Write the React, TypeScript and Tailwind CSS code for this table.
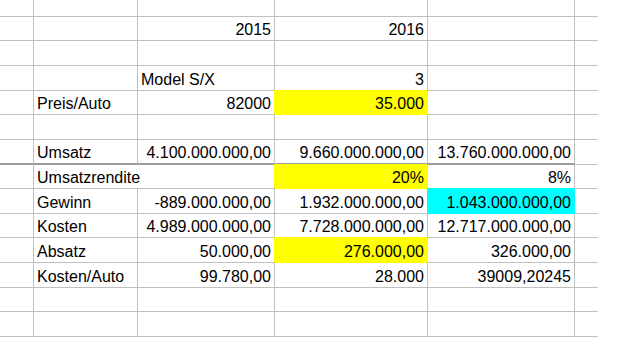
import React from "react";

type Cell = {
  text?: string;
  align?: "left" | "right";
  fill?: "yellow" | "cyan";
  span?: boolean;
};

type Row = {
  h: string;
  cells: Cell[];
  thick?: boolean;
};

const widths = ["w-[34px]", "w-[104px]", "w-[137px]", "w-[153px]", "w-[147px]", "w-[23px]"];

const R = (text: string, fill?: Cell["fill"]): Cell => ({ text, align: "right", fill });
const L = (text: string): Cell => ({ text, align: "left" });
const E: Cell = {};

const rows: Row[] = [
  { h: "h-[17px]", cells: [E, E, E, E, E, E] },
  { h: "h-[24px]", cells: [E, E, R("2015"), R("2016"), E, E] },
  { h: "h-[25px]", cells: [E, E, E, E, E, E] },
  { h: "h-[25px]", cells: [E, E, L("Model S/X"), R("3"), E, E] },
  { h: "h-[24px]", cells: [E, L("Preis/Auto"), R("82000"), R("35.000", "yellow"), E, E] },
  { h: "h-[25px]", cells: [E, E, E, E, E, E] },
  {
    h: "h-[25px]",
    thick: true,
    cells: [E, L("Umsatz"), R("4.100.000.000,00"), R("9.660.000.000,00"), R("13.760.000.000,00"), E],
  },
  {
    h: "h-[24px]",
    cells: [E, { text: "Umsatzrendite", align: "left", span: true }, R("20%", "yellow"), R("8%"), E],
  },
  {
    h: "h-[25px]",
    cells: [E, L("Gewinn"), R("-889.000.000,00"), R("1.932.000.000,00"), R("1.043.000.000,00", "cyan"), E],
  },
  {
    h: "h-[24px]",
    cells: [E, L("Kosten"), R("4.989.000.000,00"), R("7.728.000.000,00"), R("12.717.000.000,00"), E],
  },
  {
    h: "h-[25px]",
    cells: [E, L("Absatz"), R("50.000,00"), R("276.000,00", "yellow"), R("326.000,00"), E],
  },
  {
    h: "h-[25px]",
    cells: [E, L("Kosten/Auto"), R("99.780,00"), R("28.000"), R("39009,20245"), E],
  },
  { h: "h-[24px]", cells: [E, E, E, E, E, E] },
  { h: "h-[25px]", cells: [E, E, E, E, E, E] },
];

function SheetRow({ row }: { row: Row }) {
  let col = 0;
  return (
    <div className={`flex ${row.h}`}>
      {row.cells.map((cell, i) => {
        const start = col;
        col += cell.span ? 2 : 1;
        const last = start === widths.length - 1;
        const width = cell.span ? "w-[241px]" : widths[start];

        let color = "border-[#c0c0c0]";
        if (row.thick && !last) color = "border-[#c0c0c0] border-b-[#9a9a9a]";
        let bg = "bg-white";
        if (cell.fill === "yellow") {
          bg = "bg-[#ffff00] shadow-[-1px_-1px_0_#ffff00]";
          color = "border-[#ffff00]";
        } else if (cell.fill === "cyan") {
          bg = "bg-[#00ffff] shadow-[-1px_-1px_0_#00ffff]";
          color = "border-[#00ffff]";
        }

        return (
          <div
            key={i}
            className={`${width} shrink-0 flex items-end ${row.thick && !last ? "border-b-2" : "border-b"} ${
              last ? "" : "border-r"
            } ${color} ${bg} ${cell.align === "right" ? "justify-end pr-[3px]" : "justify-start pl-[3px]"}`}
          >
            {cell.text && <span className="pb-[1px] whitespace-nowrap">{cell.text}</span>}
          </div>
        );
      })}
    </div>
  );
}

export default function App() {
  return (
    <div className="w-[621px] h-[352px] bg-white overflow-hidden font-['Liberation_Sans',Arial,sans-serif] text-[16px] leading-[18px] text-black">
      <div className="w-[598px]">
        {rows.map((row, i) => (
          <SheetRow key={i} row={row} />
        ))}
      </div>
    </div>
  );
}
